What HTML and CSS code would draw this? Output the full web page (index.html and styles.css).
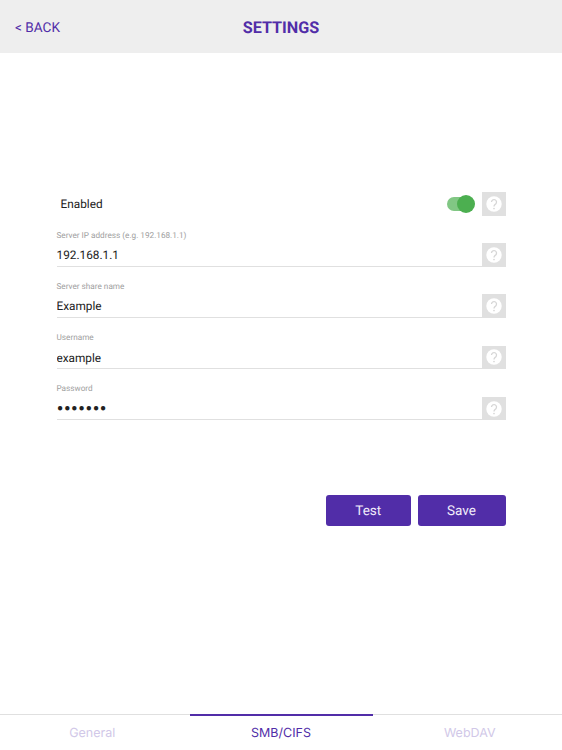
FILE: index.html
```html
<!DOCTYPE html>
<html lang="en">
<head>
    <meta charset="UTF-8">
    <meta name="viewport" content="width=device-width, initial-scale=1.0">
    <title>Settings</title>
    <link rel="stylesheet" href="styles.css">
</head>
<body>
    <svg width="0" height="0" class="sprite">
        <symbol id="help" viewBox="0 0 16 16">
            <circle cx="8" cy="8" r="7.7" fill="#fff"/>
            <path d="M5.5 6.1a2.5 2.5 0 1 1 4.2 1.8C8.6 8.9 8 9.2 8 10.6" fill="none" stroke="#d6d6d6" stroke-width="1.3"/>
            <circle cx="8" cy="12.5" r=".85" fill="#d6d6d6"/>
        </symbol>
    </svg>

    <header class="header">
        <a class="back">&lt; BACK</a>
        <h1>SETTINGS</h1>
    </header>

    <main class="content">
        <div class="row">
            <span class="enabled">Enabled</span>
            <span class="switch"></span>
            <button class="help"><svg><use href="#help"/></svg></button>
        </div>
        <div class="row">
            <label class="field">
                <span class="label">Server IP address (e.g. 192.168.1.1)</span>
                <input type="text" value="192.168.1.1">
            </label>
            <button class="help"><svg><use href="#help"/></svg></button>
        </div>
        <div class="row">
            <label class="field">
                <span class="label">Server share name</span>
                <input type="text" value="Example">
            </label>
            <button class="help"><svg><use href="#help"/></svg></button>
        </div>
        <div class="row">
            <label class="field">
                <span class="label">Username</span>
                <input type="text" value="example">
            </label>
            <button class="help"><svg><use href="#help"/></svg></button>
        </div>
        <div class="row">
            <label class="field">
                <span class="label">Password</span>
                <input type="password" value="example">
            </label>
            <button class="help"><svg><use href="#help"/></svg></button>
        </div>

        <div class="actions">
            <button class="btn test">Test</button>
            <button class="btn save">Save</button>
        </div>
    </main>

    <nav class="tabs">
        <a class="tab">General</a>
        <a class="tab active">SMB/CIFS</a>
        <a class="tab">WebDAV</a>
    </nav>
</body>
</html>
```

FILE: styles.css
```css
* {
    box-sizing: border-box;
}

body {
    margin: 0;
    height: 750px;
    display: flex;
    flex-direction: column;
    background: #fff;
    font-family: Roboto, sans-serif;
    color: #212121;
    text-rendering: geometricPrecision;
    overflow: hidden;
}

.sprite {
    position: absolute;
}

button,
input {
    border: none;
    padding: 0;
    text-rendering: inherit;
}

.header {
    flex: none;
    height: 53px;
    display: grid;
    grid-template-columns: 1fr auto 1fr;
    align-items: center;
    padding: 2px 15px 0;
    background: #eee;
    color: #512da8;
}

.back {
    font-size: 13.6px;
}

.header h1 {
    margin: 0;
    font-size: 16.2px;
    font-weight: 700;
}

.content {
    flex: 1;
    padding: 123.5px 56.5px 0;
}

.row {
    display: flex;
    align-items: flex-end;
    height: 51.2px;
}

.row:first-child {
    height: 39px;
}

.enabled {
    flex: 1;
    padding-left: 4px;
    font-size: 11.8px;
    line-height: 24px;
}

/* material style toggle */
.switch {
    position: relative;
    width: 25px;
    height: 14px;
    margin: 0 10px 5px 0;
    border-radius: 7px;
    background: #81c784;
}

.switch::after {
    content: "";
    position: absolute;
    top: -2px;
    right: -3px;
    width: 18px;
    height: 18px;
    border-radius: 50%;
    background: #4caf50;
}

.field {
    flex: 1;
    border-bottom: 1px solid #e0e0e0;
}

.label {
    display: block;
    font-size: 8.2px;
    line-height: 10px;
    color: #9e9e9e;
}

.field input {
    display: block;
    width: 100%;
    height: 25px;
    padding: 4px 0 0;
    outline: none;
    background: none;
    font-family: Roboto, sans-serif;
    font-size: 11.8px;
    color: #212121;
}

.field input[type="password"] {
    padding-top: 5px;
    font-size: 21.3px;
}

.help {
    display: flex;
    align-items: center;
    justify-content: center;
    width: 23.5px;
    height: 23.5px;
    background: #e0e0e0;
}

.help svg {
    width: 16px;
    height: 16px;
}

.actions {
    display: flex;
    justify-content: flex-end;
    gap: 7px;
    margin-top: 75px;
}

.btn {
    height: 31px;
    padding-top: 1px;
    border-radius: 3px;
    background: #512da8;
    color: #f3eefb;
    font-family: Roboto, sans-serif;
    font-size: 13.5px;
}

.test {
    width: 84.5px;
}

.save {
    width: 88px;
}

.tabs {
    flex: none;
    display: flex;
    height: 36px;
    border-top: 1px solid #e0e0e0;
}

.tab {
    flex: 1;
    margin-top: -1px;
    border-top: 2px solid transparent;
    text-align: center;
    font-family: Inter, sans-serif;
    font-size: 12.5px;
    line-height: 35px;
    color: #d1c8e8;
}

.tab:first-child {
    padding-right: 5px;
}

.tab:last-child {
    padding-left: 5px;
}

.tab.active {
    flex: 0 0 183px;
    border-color: #512da8;
    color: #512da8;
}
```
